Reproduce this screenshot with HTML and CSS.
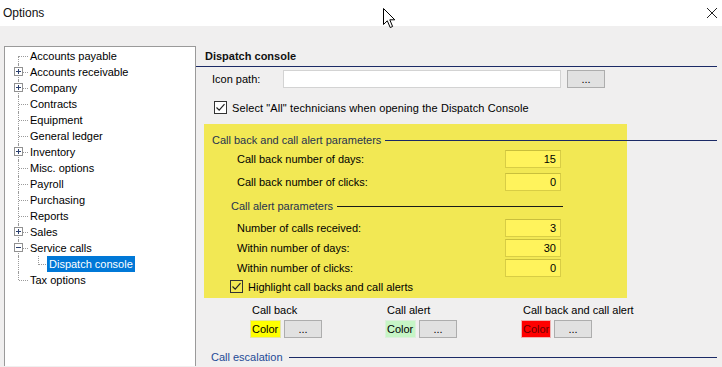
FILE: index.html
```html
<!DOCTYPE html>
<html>
<head>
<meta charset="utf-8">
<link rel="stylesheet" href="styles.css">
</head>
<body>
<div class="titlebar">
  <span class="title">Options</span>
  <svg class="close" width="12" height="12" viewBox="0 0 12 12"><path d="M1 1 L11 11 M11 1 L1 11" stroke="#222" stroke-width="1"/></svg>
</div>
<div class="main">
  <div class="tree">
    <div class="row first"><span class="g"></span><span class="t">Accounts payable</span></div>
    <div class="row"><span class="g"><svg class="pm" width="9" height="9" viewBox="0 0 9 9"><rect x="0.5" y="0.5" width="8" height="8" fill="#fff" stroke="#919191"/><path d="M2 4.5 H7 M4.5 2 V7" stroke="#2b3f6e"/></svg></span><span class="t">Accounts receivable</span></div>
    <div class="row"><span class="g"><svg class="pm" width="9" height="9" viewBox="0 0 9 9"><rect x="0.5" y="0.5" width="8" height="8" fill="#fff" stroke="#919191"/><path d="M2 4.5 H7 M4.5 2 V7" stroke="#2b3f6e"/></svg></span><span class="t">Company</span></div>
    <div class="row"><span class="g"></span><span class="t">Contracts</span></div>
    <div class="row"><span class="g"></span><span class="t">Equipment</span></div>
    <div class="row"><span class="g"></span><span class="t">General ledger</span></div>
    <div class="row"><span class="g"><svg class="pm" width="9" height="9" viewBox="0 0 9 9"><rect x="0.5" y="0.5" width="8" height="8" fill="#fff" stroke="#919191"/><path d="M2 4.5 H7 M4.5 2 V7" stroke="#2b3f6e"/></svg></span><span class="t">Inventory</span></div>
    <div class="row"><span class="g"></span><span class="t">Misc. options</span></div>
    <div class="row"><span class="g"></span><span class="t">Payroll</span></div>
    <div class="row"><span class="g"></span><span class="t">Purchasing</span></div>
    <div class="row"><span class="g"></span><span class="t">Reports</span></div>
    <div class="row"><span class="g"><svg class="pm" width="9" height="9" viewBox="0 0 9 9"><rect x="0.5" y="0.5" width="8" height="8" fill="#fff" stroke="#919191"/><path d="M2 4.5 H7 M4.5 2 V7" stroke="#2b3f6e"/></svg></span><span class="t">Sales</span></div>
    <div class="row"><span class="g"><svg class="pm" width="9" height="9" viewBox="0 0 9 9"><rect x="0.5" y="0.5" width="8" height="8" fill="#fff" stroke="#919191"/><path d="M2 4.5 H7" stroke="#2b3f6e"/></svg></span><span class="t">Service calls</span></div>
    <div class="row child"><span class="g nohz"></span><span class="g2"></span><span class="t sel">Dispatch console</span></div>
    <div class="row last"><span class="g"></span><span class="t">Tax options</span></div>
  </div>
  <div class="panel">
    <div class="hdr">Dispatch console</div>
    <div class="iconrow">
      <span class="lbl">Icon path:</span>
      <span class="txt"></span>
      <span class="btn">...</span>
    </div>
    <div class="chkrow">
      <svg width="13" height="13" viewBox="0 0 13 13"><rect x="0.5" y="0.5" width="12" height="12" fill="#fff" stroke="#333"/><path d="M2.5 6.5 L5.2 9.2 L10.5 3.2" fill="none" stroke="#222" stroke-width="1.2"/></svg>
      <span class="wide">Select "All" technicians when opening the Dispatch Console</span>
    </div>
    <div class="yellow">
      <div class="sec"><span>Call back and call alert parameters</span><span class="line navy"></span></div>
      <div class="frow r1"><span class="flbl">Call back number of days:</span><span class="num">15</span></div>
      <div class="frow r2"><span class="flbl">Call back number of clicks:</span><span class="num">0</span></div>
      <div class="sub"><span>Call alert parameters</span><span class="line dark"></span></div>
      <div class="frow r3"><span class="flbl">Number of calls received:</span><span class="num">3</span></div>
      <div class="frow r4"><span class="flbl">Within number of days:</span><span class="num">30</span></div>
      <div class="frow r4"><span class="flbl">Within number of clicks:</span><span class="num">0</span></div>
      <div class="hl">
        <svg width="13" height="13" viewBox="0 0 13 13"><rect x="0.5" y="0.5" width="12" height="12" fill="none" stroke="#333"/><path d="M2.5 6.5 L5.2 9.2 L10.5 3.2" fill="none" stroke="#222" stroke-width="1.2"/></svg>
        <span>Highlight call backs and call alerts</span>
      </div>
    </div>
    <div class="colors">
      <div class="grp">
        <div class="glbl">Call back</div>
        <div class="gctl"><span class="sw sw-y">Color</span><span class="btn">...</span></div>
      </div>
      <div class="grp">
        <div class="glbl">Call alert</div>
        <div class="gctl"><span class="sw sw-g">Color</span><span class="btn">...</span></div>
      </div>
      <div class="grp">
        <div class="glbl">Call back and call alert</div>
        <div class="gctl"><span class="sw sw-r">Color</span><span class="btn">...</span></div>
      </div>
    </div>
    <div class="esc"><span>Call escalation</span><span class="line navy"></span></div>
  </div>
</div>
<svg class="cursor" width="13" height="21" viewBox="0 0 13 21"><path d="M0.5 0.5 L0.5 16.5 L4.3 12.8 L7.2 19.5 L9.6 18.5 L6.8 11.8 L11.8 11.8 Z" fill="#fff" stroke="#000" stroke-width="1"/></svg>
</body>
</html>
```

FILE: styles.css
```css
html, body {
  margin: 0;
  padding: 0;
}
body {
  width: 722px;
  height: 367px;
  overflow: hidden;
  background: #f0efef;
  font-family: "Liberation Sans", Arial, sans-serif;
  font-size: 11px;
  color: #000;
  position: relative;
}
.titlebar {
  height: 26px;
  background: #fff;
  display: flex;
  align-items: center;
  justify-content: space-between;
  padding: 0 4px 0 3px;
}
.title {
  font-size: 12px;
  color: #111;
}
.close {
  display: block;
}
.main {
  display: flex;
  padding-top: 20px;
  height: 321px;
  overflow: hidden;
}
.tree {
  margin-left: 4px;
  width: 190px;
  height: 320px;
  flex: none;
  border: 1px solid #9a9a9a;
  border-bottom: none;
  background: #fff;
  padding-top: 1px;
  box-sizing: border-box;
  width: 192px;
}
.row {
  display: flex;
  height: 16px;
  padding-left: 9px;
}
.g {
  position: relative;
  width: 14px;
  height: 16px;
  flex: none;
}
.g::before {
  content: "";
  position: absolute;
  left: 4px;
  top: 0;
  bottom: 0;
  border-left: 1px dotted #9a9a9a;
}
.first .g::before { top: 8px; }
.last .g::before { bottom: 8px; }
.g::after {
  content: "";
  position: absolute;
  left: 5px;
  top: 8px;
  width: 9px;
  border-top: 1px dotted #9a9a9a;
}
.g.nohz::after { display: none; }
.pm {
  position: absolute;
  left: 0;
  top: 3px;
  z-index: 1;
}
.g2 {
  position: relative;
  width: 19px;
  height: 16px;
  flex: none;
}
.g2::before {
  content: "";
  position: absolute;
  left: 10px;
  top: 0;
  height: 9px;
  border-left: 1px dotted #9a9a9a;
}
.g2::after {
  content: "";
  position: absolute;
  left: 11px;
  top: 8px;
  width: 7px;
  border-top: 1px dotted #9a9a9a;
}
.t {
  padding: 0 2px;
  line-height: 16px;
  white-space: nowrap;
}
.t.sel {
  background: #0078d7;
  color: #fff;
}
.panel {
  flex: 1;
  min-width: 0;
}
.hdr {
  height: 20px;
  display: flex;
  align-items: center;
  padding-left: 9px;
  margin-right: 5px;
  border-bottom: 1px solid #1b2a66;
  font-weight: bold;
  color: #111;
}
.iconrow {
  display: flex;
  align-items: center;
  height: 18px;
  margin-top: 3px;
  padding-left: 16px;
}
.lbl {
  width: 71px;
  flex: none;
}
.txt {
  width: 276px;
  height: 16px;
  background: #fff;
  border: 1px solid #d3d3d3;
}
.btn {
  box-sizing: border-box;
  width: 38px;
  height: 18px;
  background: #e1e1e1;
  border: 1px solid #adadad;
  display: flex;
  align-items: center;
  justify-content: center;
  font-size: 11px;
  line-height: 1;
}
.iconrow .btn {
  margin-left: 6px;
}
.chkrow {
  display: flex;
  align-items: center;
  gap: 5px;
  height: 13px;
  margin-top: 13px;
  padding-left: 18px;
}
.wide {
  letter-spacing: 0.1px;
}
.chkrow svg, .hl svg {
  display: block;
  flex: none;
}
.yellow {
  margin-top: 10px;
  margin-left: 8px;
  width: 423px;
  background: #f2e854;
  padding: 8px 0 5px;
}
.sec {
  display: flex;
  align-items: center;
  gap: 4px;
  height: 16px;
  padding-left: 8px;
  margin-right: -90px;
  color: #26334f;
}
.line {
  flex: 1;
  height: 1px;
}
.line.navy { background: #1b2a66; }
.line.dark { background: #1a1a1a; }
.frow {
  display: flex;
  align-items: center;
  height: 18px;
  padding-left: 33px;
  padding-right: 66px;
}
.r1 { margin-top: 2px; }
.r2 { margin-top: 5px; }
.r3 { margin-top: 5px; }
.r4 { margin-top: 2px; }
.flbl {
  flex: 1;
  white-space: nowrap;
}
.num {
  box-sizing: border-box;
  width: 56px;
  height: 18px;
  background: #fff35c;
  border: 1px solid #d8cd45;
  border-top-color: #c9bf3c;
  text-align: right;
  padding-right: 4px;
  line-height: 16px;
}
.sub {
  display: flex;
  align-items: center;
  gap: 4px;
  height: 16px;
  margin-top: 7px;
  padding-left: 27px;
  padding-right: 64px;
  color: #26334f;
}
.hl {
  display: flex;
  align-items: center;
  gap: 5px;
  height: 13px;
  margin-top: 3px;
  padding-left: 26px;
}
.colors {
  display: flex;
  margin-top: 5px;
  padding-left: 54px;
}
.grp {
  width: 135px;
  flex: none;
}
.grp + .grp {
  width: 136px;
}
.glbl {
  height: 14px;
  line-height: 14px;
  padding-left: 2px;
  white-space: nowrap;
}
.gctl {
  display: flex;
  gap: 3px;
  margin-top: 3px;
}
.sw {
  box-sizing: border-box;
  width: 31px;
  height: 18px;
  line-height: 16px;
  padding-left: 1px;
  border: 1px solid #e4e4c8;
}
.sw-y { background: #ffff00; border-color: #e6e6a0; }
.sw-g { background: #c6f5c6; border-color: #dcefdc; }
.sw-r { background: #ff0000; border-color: #f0b0b0; color: #6a0000; width: 30px; }
.esc {
  display: flex;
  align-items: center;
  gap: 6px;
  height: 16px;
  margin-top: 11px;
  padding-left: 15px;
  margin-right: 5px;
  color: #1f4a96;
}
.cursor {
  position: absolute;
  left: 383px;
  top: 8px;
}
```
